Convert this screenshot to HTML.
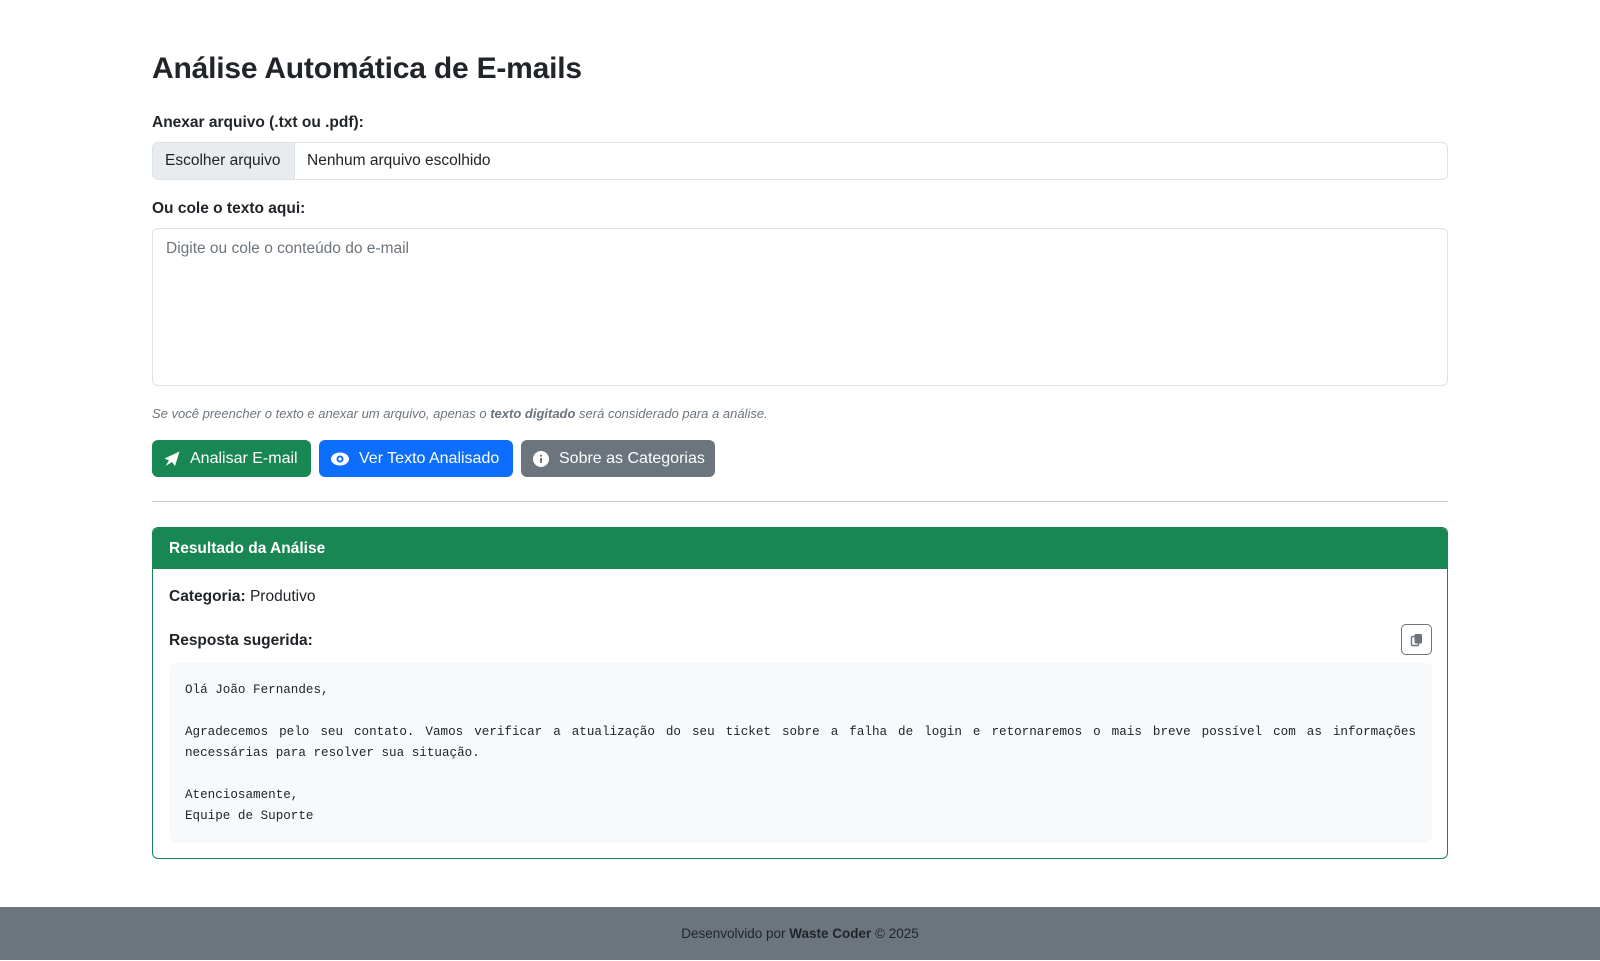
<!DOCTYPE html>
<html><head><meta charset="utf-8"><style>
*{box-sizing:border-box;margin:0;padding:0}
body{width:1600px;height:960px;overflow:hidden;background:#fff;font-family:"Liberation Sans",sans-serif;color:#212529;font-size:16px;position:relative}
h1{position:absolute;left:152px;top:49px;font-size:30px;font-weight:bold;line-height:40px;letter-spacing:-0.2px}
.lbl{position:absolute;left:152px;font-weight:bold;font-size:15.5px;line-height:20px}
.file{position:absolute;left:152px;top:142px;width:1296px;height:38px;border:1px solid #dee2e6;border-radius:6px;display:flex;align-items:center;overflow:hidden;white-space:nowrap}
.file .b{background:#e9ecef;height:100%;padding:0 12px;display:flex;align-items:center;border-right:1px solid #dee2e6;width:142px;font-size:15.5px}
.file .t{padding-left:12px;font-size:15.5px}
.ta{position:absolute;left:152px;top:228px;width:1296px;height:158px;border:1px solid #dee2e6;border-radius:6px;padding:11px 13px;color:#6c757d;font-size:15.5px}
.help{position:absolute;left:152px;top:406px;font-size:13px;font-style:italic;color:#6c757d}
.btn{position:absolute;top:440px;height:37px;border-radius:6px;color:#fff;display:flex;align-items:center;padding-left:12px;font-size:16px;white-space:nowrap}
.btn svg{margin-right:10px}
hr{position:absolute;left:152px;top:501px;width:1296px;border:0;border-top:1px solid #c8c8c8}
.card{position:absolute;left:152px;top:527px;width:1296px;height:332px;border:1px solid #198754;border-radius:6px;overflow:hidden}
.ch{background:#198754;color:#fff;height:41px;padding-left:16px;display:flex;align-items:center;font-weight:bold;font-size:15.5px}
.copy{position:absolute;left:1248px;top:96px;width:31px;height:31px;border:1px solid #6c757d;border-radius:5px;display:flex;align-items:center;justify-content:center}
pre{position:absolute;left:16px;top:135px;width:1263px;height:180px;background:#f8f9fa;border-radius:6px;padding:17px 16px;font-family:"Liberation Mono",monospace;font-size:12.6px;line-height:21px;white-space:pre-wrap;text-align:justify;color:#212529}
footer{position:absolute;left:0;top:907px;width:1600px;height:53px;background:#6c757d;text-align:center;line-height:54px;font-size:13.5px;color:#212529}
</style></head><body>
<h1>Análise Automática de E-mails</h1>
<div class="lbl" style="top:113px">Anexar arquivo (.txt ou .pdf):</div>
<div class="file"><div class="b">Escolher arquivo</div><div class="t">Nenhum arquivo escolhido</div></div>
<div class="lbl" style="top:199px">Ou cole o texto aqui:</div>
<div class="ta">Digite ou cole o conteúdo do e-mail</div>
<div class="help">Se você preencher o texto e anexar um arquivo, apenas o <b>texto digitado</b> será considerado para a análise.</div>
<div class="btn" style="left:152px;width:159px;background:#198754"><svg width="16" height="16" viewBox="0 0 16 16"><path d="M15.5 0.5L0.5 7.5 5 9.5 1.5 15 8 11 11 15z" fill="#fff"/></svg>Analisar E-mail</div>
<div class="btn" style="left:319px;width:194px;background:#0d6efd"><svg width="18" height="14" viewBox="0 0 18 14"><ellipse cx="9" cy="7" rx="9" ry="6.5" fill="#fff"/><circle cx="9" cy="7" r="3.5" fill="#0d6efd"/><circle cx="9" cy="7" r="1.6" fill="#fff"/></svg>Ver Texto Analisado</div>
<div class="btn" style="left:521px;width:194px;background:#6c757d"><svg width="16" height="16" viewBox="0 0 16 16"><circle cx="8" cy="8" r="8" fill="#fff"/><rect x="7" y="7" width="2" height="5" fill="#6c757d"/><circle cx="8" cy="4.7" r="1.1" fill="#6c757d"/></svg>Sobre as Categorias</div>
<hr>
<div class="card">
<div class="ch">Resultado da Análise</div>
<div style="position:absolute;left:16px;top:60px;font-size:15.5px"><b>Categoria:</b> Produtivo</div>
<div style="position:absolute;left:16px;top:104px;font-weight:bold;font-size:15.5px">Resposta sugerida:</div>
<div class="copy"><svg width="14" height="14" viewBox="0 0 14 14"><rect x="1.5" y="3.5" width="7" height="9" rx="1" fill="none" stroke="#6c757d" stroke-width="1.4"/><rect x="4.5" y="1" width="7.5" height="9.5" rx="1" fill="#6c757d"/></svg></div>
<pre>Olá João Fernandes,

Agradecemos pelo seu contato. Vamos verificar a atualização do seu ticket sobre a falha de login e retornaremos o mais breve possível com as informações necessárias para resolver sua situação.

Atenciosamente,
Equipe de Suporte</pre>
</div>
<footer>Desenvolvido por <b>Waste Coder</b> © 2025</footer>
</body></html>
